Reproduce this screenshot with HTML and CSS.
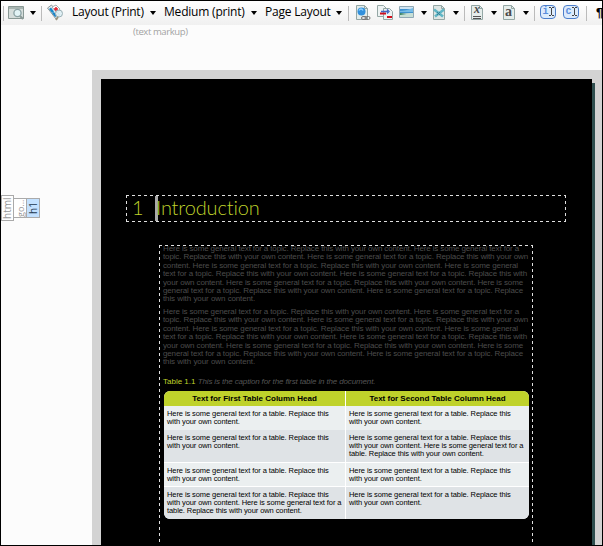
FILE: index.html
```
<!DOCTYPE html>
<html lang="en">
<head>
<meta charset="utf-8">
<title>Page Layout</title>
<link rel="stylesheet" href="styles.css">
</head>
<body>
<div class="window">
  <header class="toolbar">
    <i class="sep"></i>
    <svg width="18" height="15" viewBox="0 0 18 15"><path d="M.5 1.500h15v12H.5z" fill="#d5dddb" stroke="#899894"/><path d="M1 2h14v2H1z" fill="#a8b5b1"/><circle cx="9.500" cy="8" r="3.600" fill="#e2f3f5" stroke="#8aa1a3" stroke-width="1.300"/><path d="m12 11 3 3" stroke="#8a9996" stroke-width="2"/></svg>
    <i class="caret"></i>
    <i class="sep"></i>
    <svg width="18" height="17" viewBox="0 0 18 17"><path d="m.5 4 4-3 8 10-3.500 4z" fill="#e9edef" stroke="#8b9699"/><path d="m5 3 4-2 4 4-3 4z" fill="#fff" stroke="#a4adaf"/><path d="m2 5 2-1.500 3 4-2 1.500z" fill="#1589cb"/><path d="m5 9 2-1 3 4-2 1z" fill="#1682c7"/><path d="M7 5h4M9 3v4" stroke="#e21d2b" stroke-width="1.500"/><circle cx="12" cy="9.500" r="3.500" fill="#dceff5" fill-opacity=".85" stroke="#9bb0b5"/><path d="m11 13-2 3" stroke="#9a927c" stroke-width="1.800"/></svg>
    <span class="menu layout">Layout (Print)</span>
    <i class="caret"></i>
    <span class="menu medium">Medium (print)</span>
    <i class="caret"></i>
    <span class="menu page-menu">Page Layout</span>
    <i class="caret"></i>
    <i class="sep"></i>
    <svg width="15" height="17" viewBox="0 0 15 17"><path d="M.5 1.500h8l3 3v11H.5z" fill="#e3eceb" stroke="#94a7a5"/><path d="M8.500 1.500v3h3" fill="none" stroke="#94a7a5"/><circle cx="5.500" cy="7.500" r="4" fill="#3290dc"/><path d="M3 6.500c1-2 3-2 4 0" fill="none" stroke="#8fd2ff" stroke-width="1.500"/><rect x="5.500" y="12.500" width="5" height="3" rx="1.500" fill="#ddd" stroke="#777"/><rect x="9" y="12.500" width="5" height="3" rx="1.500" fill="none" stroke="#777"/></svg>
    <svg width="17" height="17" viewBox="0 0 17 17"><path d="M.5 1.500h6l3 3v8h-9z" fill="#edf2f2" stroke="#94a7a5"/><path d="M6.500 4.500h6l3 3v8h-9z" fill="#edf2f2" stroke="#94a7a5"/><path d="M3 9.500h6M10 13h5" stroke="#d10d1b" stroke-width="2"/><path d="M4 7.500h7M10 5.500l2 2-2 2" fill="none" stroke="#4266c2" stroke-width="1.400"/></svg>
    <svg width="16" height="13" viewBox="0 0 16 13"><path d="M.5.5h14v11H.5z" fill="#cfe4f2" stroke="#90a8b4"/><path d="M1 3h13v4H1z" fill="#3d91cf"/><path d="M1 5q5 0 13-3v4H1z" fill="#75bbe6"/><path d="M1 7q6 1 13 1v3H1z" fill="#358060"/><path d="M1 9l13-2v4H1z" fill="#c7dfd5"/></svg>
    <i class="caret"></i>
    <svg width="14" height="17" viewBox="0 0 14 17"><path d="M.5 1.500h8l3 3v11H.5z" fill="#dde6e4" stroke="#94a7a5"/><path d="M8.500 1.500v3h3" fill="none" stroke="#94a7a5"/><path d="m1 5.500 9 7M11 5.500l-9 7" stroke="#60b6c6" stroke-width="2.600"/><path d="m4 8 3 3m0-3-3 3" stroke="#3e8195"/></svg>
    <i class="caret"></i>
    <i class="sep"></i>
    <span class="doc-icon"><svg width="12" height="16" viewBox="0 0 12 16"><path d="M.5.5h8l3 3v11H.5z" fill="#e5edeb" stroke="#94a7a5"/><path d="M8.500.5v3h3" fill="none" stroke="#94a7a5"/><path d="M2 11.500h8M2 13.500h8" stroke="#555"/></svg><b class="x">x</b></span>
    <i class="caret"></i>
    <span class="doc-icon"><svg width="12" height="16" viewBox="0 0 12 16"><path d="M.5.5h8l3 3v11H.5z" fill="#e5edeb" stroke="#94a7a5"/><path d="M8.500.5v3h3" fill="none" stroke="#94a7a5"/></svg><b>a</b></span>
    <i class="caret"></i>
    <i class="sep"></i>
    <span class="key"><b>i</b><svg width="5" height="9"><path d="M0 .5h2m1 0h2M2.500 1v7M0 8.500h2m1 0h2" stroke="#444"/></svg></span>
    <span class="key"><b>c</b><svg width="5" height="9"><path d="M0 .5h2m1 0h2M2.500 1v7M0 8.500h2m1 0h2" stroke="#444"/></svg></span>
    <i class="sep"></i>
    <span class="pilcrow">¶</span>
  </header>
  <main class="workspace">
    <nav class="crumbs"><span class="html">html</span><span class="mid">go...</span><span class="h1">h1</span></nav>
    <section class="viewer">
      <div class="markup">(text markup)</div>
      <div class="desk">
        <article class="sheet">
          <h1 class="heading dashed"><span class="num">1</span><span class="cursor"></span><span class="name">Introduction</span></h1>
          <div class="body dashed">
            <div class="para">
              <p class="w1">Here is some general text for a topic. Replace this with your own content. Here is some general text for a</p>
              <p class="w2">topic. Replace this with your own content. Here is some general text for a topic. Replace this with your own</p>
              <p class="w3">content. Here is some general text for a topic. Replace this with your own content. Here is some general</p>
              <p class="w4">text for a topic. Replace this with your own content. Here is some general text for a topic. Replace this with</p>
              <p class="w5">your own content. Here is some general text for a topic. Replace this with your own content. Here is some</p>
              <p class="w5">general text for a topic. Replace this with your own content. Here is some general text for a topic. Replace</p>
              <p class="w7">this with your own content.</p>
            </div>
            <div class="para">
              <p class="w1">Here is some general text for a topic. Replace this with your own content. Here is some general text for a</p>
              <p class="w2">topic. Replace this with your own content. Here is some general text for a topic. Replace this with your own</p>
              <p class="w3">content. Here is some general text for a topic. Replace this with your own content. Here is some general</p>
              <p class="w4">text for a topic. Replace this with your own content. Here is some general text for a topic. Replace this with</p>
              <p class="w5">your own content. Here is some general text for a topic. Replace this with your own content. Here is some</p>
              <p class="w5">general text for a topic. Replace this with your own content. Here is some general text for a topic. Replace</p>
              <p class="w7">this with your own content.</p>
            </div>
            <div class="caption"><span>Table 1.1</span> <em>This is the caption for the first table in the document.</em></div>
            <div class="table">
              <div class="th">Text for First Table Column Head</div><div class="th">Text for Second Table Column Head</div>
              <div class="td">Here is some general text for a table. Replace this<br>with your own content.</div><div class="td">Here is some general text for a table. Replace this<br>with your own content.</div>
              <div class="td dark">Here is some general text for a table. Replace this<br>with your own content.</div><div class="td dark">Here is some general text for a table. Replace this<br>with your own content. Here is some general text for a<br>table. Replace this with your own content.</div>
              <div class="td line">Here is some general text for a table. Replace this<br>with your own content.</div><div class="td line">Here is some general text for a table. Replace this<br>with your own content.</div>
              <div class="td dark line">Here is some general text for a table. Replace this<br>with your own content. Here is some general text for a<br>table. Replace this with your own content.</div><div class="td dark line">Here is some general text for a table. Replace this<br>with your own content.</div>
            </div>
          </div>
        </article>
      </div>
    </section>
  </main>
</div>
</body>
</html>
```
FILE: styles.css
```
* { box-sizing: border-box; }
body { margin: 0; overflow: hidden; }
.window { width: 603px; height: 546px; border: 1px solid #000; background: #fcfcfc; display: flex; flex-direction: column; overflow: hidden; font-family: "Liberation Sans", sans-serif; }
.toolbar { height: 24px; flex: none; padding-left: 2px; display: grid; align-items: center; background: linear-gradient(#fff, #f0f0f0); overflow: hidden;
  grid-template-columns: 5px 22px 11px 6px 25px 78px 14px 87px 14px 71px 12px 8px 21px 22px 22px 12px 20px 11px 7px 20px 12px 20px 11px 6px 23px 23px 10px 8px; }
.toolbar > svg { display: block; margin-top: -1px; }
.sep { width: 1px; height: 15px; background: #bbb; }
.caret { width: 6px; height: 4px; background: #000; clip-path: polygon(0 0, 100% 0, 50% 100%); margin-top: 0; }
.menu { font: 12px/16px "Open Sans", sans-serif; color: #000; white-space: nowrap; margin-top: -2px; }
.layout { letter-spacing: -.22px; }
.medium { letter-spacing: -.2px; }
.page-menu { letter-spacing: -.22px; }
.doc-icon { position: relative; width: 12px; height: 16px; }
.doc-icon svg { display: block; }
.doc-icon b { position: absolute; left: 2px; top: 0; font: bold 14px/13px "Liberation Serif", serif; color: #4b4b4b; }
.doc-icon .x { left: 3px; top: -2px; font-size: 12px; font-style: italic; }
.key { width: 16px; height: 14px; margin-top: -3px; border: 1.5px solid #4c7ecb; border-radius: 4px; background: #dcebfc; display: flex; align-items: center; justify-content: center; }
.key b { width: 6px; display: flex; justify-content: center; font: bold 10px/10px "Liberation Mono", monospace; color: #5b8edc; }
.pilcrow { font: bold 13px/16px "Liberation Sans", sans-serif; }
.workspace { flex: 1; display: flex; min-height: 0; }
.crumbs { width: 91px; height: 26px; margin-top: 170px; display: flex; align-items: center; }
.crumbs span { writing-mode: vertical-rl; transform: rotate(180deg); display: flex; align-items: center; justify-content: center; border: 1px solid #aaa; color: #999; font: 10px/11px "Open Sans", sans-serif; height: 20px; width: 14px; background: #fff; }
.crumbs .html { height: 26px; width: 13px; }
.crumbs .mid { width: 12px; border-left: 0; border-right: 0; font-size: 9px; }
.crumbs .h1 { background: #c3e1ff; color: #1d3850; }
.viewer { width: 510px; display: flex; flex-direction: column; }
.markup { height: 45px; padding: 0 0 0 41px; font: 9.5px/13px "Open Sans", sans-serif; letter-spacing: -.4px; color: #a3a3a3; flex: none; }
.desk { flex: 1; min-height: 0; background: #d3d3d3; padding: 9px 10px 0 9px; }
.sheet { width: 491px; height: 466px; background: #000; box-shadow: 3px 4px 0 #2f4f4f; padding: 116px 0 0 25px; }
.dashed { background:
  repeating-linear-gradient(90deg, #e0e0e0 0 3px, transparent 3px 6px) 0 0 / 100% 1px no-repeat,
  repeating-linear-gradient(90deg, #e0e0e0 0 3px, transparent 3px 6px) 0 100% / 100% 1px no-repeat,
  repeating-linear-gradient(#e0e0e0 0 3px, transparent 3px 6px) 0 0 / 1px 100% no-repeat,
  repeating-linear-gradient(#e0e0e0 0 3px, transparent 3px 6px) 100% 0 / 1px 100% no-repeat; }
.heading { width: 440px; height: 27px; margin: 0; padding: 0 1px 3px; display: flex; align-items: center; color: #bfd22b; font: 300 20px/24px "Lato", sans-serif; }
.num { width: 28px; padding-left: 5px; }
.cursor { width: 3px; height: 25px; margin-top: 3px; background: #aaa; }
.name { margin-left: -2px; letter-spacing: -.15px; }
.body { width: 374px; height: 320px; margin: 23px 0 0 33px; padding: 1px 0 0 4px; font-size: 8px; line-height: 8.4px; color: #4c4c4c; }
.para { height: 63px; margin-top: -1px; }
.para + .para { margin-top: 0; height: 68px; }
.para p { margin: 0; height: 8.4px; white-space: nowrap; text-align: justify; text-align-last: justify; letter-spacing: -.14px; }
.w1 { width: 356px; }
.w2 { width: 365px; }
.w3 { width: 355px; }
.w4 { width: 364px; }
.w5 { width: 360px; }
.w7 { width: 92px; }
.caption { height: 15px; padding-top: 1px; line-height: 10px; white-space: nowrap; color: #555; }
.caption em { letter-spacing: -.14px; }
.caption span { color: #bfd22b; }
.table { width: 365px; margin-left: 1px; display: grid; grid-template-columns: 181px 183px; column-gap: 1px; grid-template-rows: 15px 24px 32px 24px 33px; background: #fff; border-radius: 6px; overflow: hidden; color: #000; }
.th { background: #bfd22b; font-weight: bold; line-height: 15px; text-align: center; white-space: nowrap; }
.td { background: #ebeff0; padding: 4px 0 0 3px; font-size: 7.5px; line-height: 8.1px; letter-spacing: -.09px; white-space: nowrap; }
.dark { background: #dfe3e6; }
.line { border-top: 1px solid #fff; padding-top: 3.5px; }
```
